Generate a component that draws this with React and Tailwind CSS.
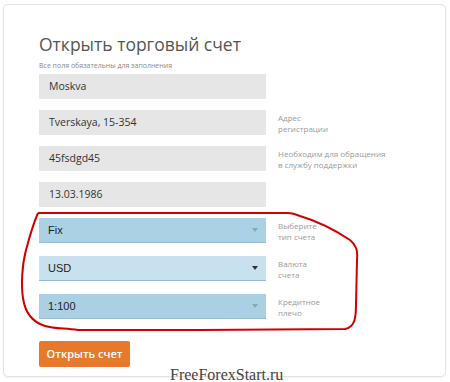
import React from "react";

const fields = [
  { value: "Moskva", label: null },
  { value: "Tverskaya, 15-354", label: ["Адрес", "регистрации"] },
  { value: "45fsdgd45", label: ["Необходим для обращения", "в службу поддержки"] },
  { value: "13.03.1986", label: null },
];

const selects = [
  { value: "Fix", label: ["Выберите", "тип счета"], bg: "bg-[#abd1e4]", arrow: "text-[#8aa]" },
  { value: "USD", label: ["Валюта", "счета"], bg: "bg-[#c9e1ee]", arrow: "text-[#333]" },
  { value: "1:100", label: ["Кредитное", "плечо"], bg: "bg-[#acd0e3]", arrow: "text-[#8aa]" },
];

function Hint({ lines }) {
  if (!lines) return null;
  return (
    <div className="ml-[12px] pt-[2px] text-[8px] leading-[11px] text-[#9a9a9a]">
      {lines.map((l) => (
        <div key={l}>{l}</div>
      ))}
    </div>
  );
}

export default function App() {
  return (
    <div className="relative w-[450px] h-[382px] bg-white overflow-hidden font-['Open_Sans',sans-serif]">
      <div className="ml-[3px] mt-[4px] w-[443px] h-[373px] rounded-[5px] border border-[#e3e3e3] shadow-[0_1px_2px_rgba(0,0,0,0.06)] pl-[35px] pt-[27px]">
        <h1 className="text-[17.5px] leading-[24px] text-[#555]">Открыть торговый счет</h1>
        <p className="mt-[5px] text-[7px] leading-[10px] text-[#888]">Все поля обязательны для заполнения</p>

        <div className="mt-[3px] flex flex-col gap-[11px]">
          {fields.map((f) => (
            <div key={f.value} className="flex items-start">
              <div className="w-[227px] h-[25px] bg-[#e6e6e6] flex items-center pl-[10px] text-[10.5px] text-[#333]">
                {f.value}
              </div>
              <Hint lines={f.label} />
            </div>
          ))}
        </div>

        <div className="mt-[11px] flex flex-col gap-[13px]">
          {selects.map((s) => (
            <div key={s.value} className="flex items-start">
              <div
                className={`w-[227px] h-[25px] ${s.bg} border-b border-[#95bccf] flex items-center justify-between pl-[9px] pr-[8px] font-['Liberation_Sans',sans-serif] text-[11px] text-[#222]`}
              >
                <span>{s.value}</span>
                <svg width="6" height="4" viewBox="0 0 6 4" className={s.arrow}>
                  <path d="M0 0h6L3 4z" fill="currentColor" />
                </svg>
              </div>
              <Hint lines={s.label} />
            </div>
          ))}
        </div>

        <button className="mt-[22px] w-[91px] h-[26px] rounded-[2px] bg-[#e8792a] text-white text-[11px] font-semibold">
          Открыть счет
        </button>
      </div>

      {/* hand-drawn highlight */}
      <svg className="absolute inset-0 pointer-events-none" width="450" height="382" viewBox="0 0 450 382">
        <path
          d="M38 213 C34 222 30 235 26 250 C22 265 21 285 23 298 C25 312 32 322 45 326 C55 329 65 328 78 330 L200 330 L345 329 C354 327 356 320 356 305 L357 260 C358 250 356 245 350 240 C335 230 320 222 300 216 C295 214 292 213 288 213 L38 213"
          fill="none"
          stroke="#d00000"
          strokeWidth="2"
          strokeLinejoin="round"
        />
      </svg>

      <div className="absolute left-[170px] top-[366px] font-['Liberation_Serif',serif] text-[16px] leading-[18px] text-[#444]">
        FreeForexStart.ru
      </div>
    </div>
  );
}
